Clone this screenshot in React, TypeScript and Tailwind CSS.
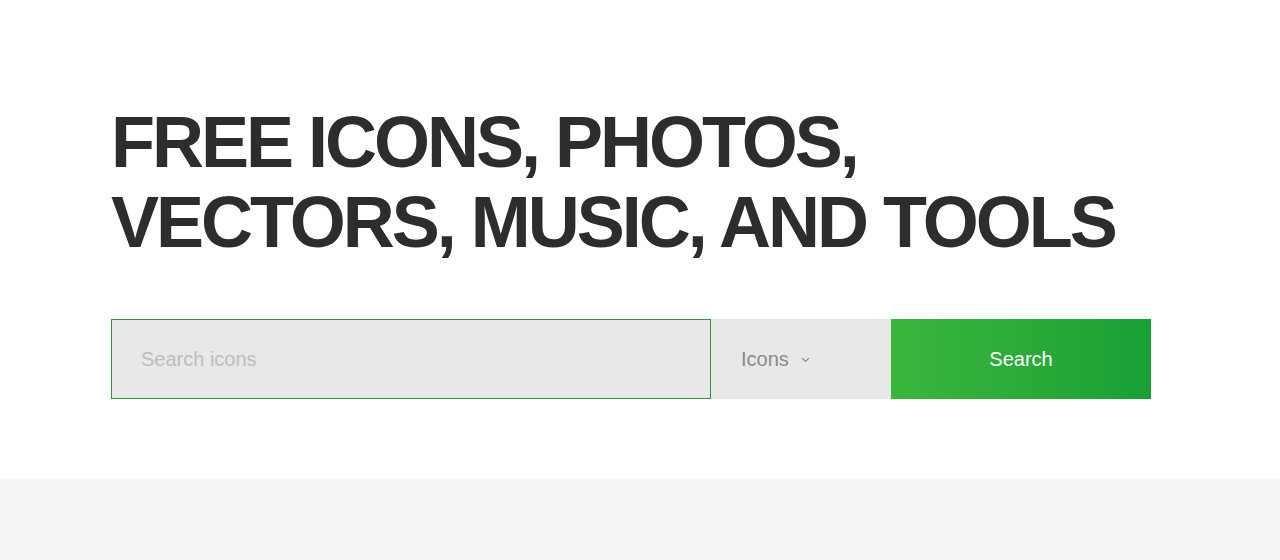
import React from "react";

export default function App() {
  return (
    <div className="min-h-[560px] bg-[#f4f4f4]" style={{ fontFamily: '"Liberation Sans", Arial, sans-serif' }}>
      <section className="bg-white h-[479px] pt-[102px] pl-[111px]">
        <h1 className="text-[72px] leading-[80px] font-bold text-[#2d2d2d] tracking-[-3px]">
          FREE ICONS, PHOTOS,
          <br />
          VECTORS, MUSIC, AND TOOLS
        </h1>
        <div className="mt-[57px] flex h-[80px]">
          <div className="w-[600px] border border-[#2f9447] bg-[#e8e8e8] flex items-center pl-[29px]">
            <input
              className="w-full bg-transparent outline-none text-[20px] text-[#555] placeholder:text-[#bdbdbd]"
              placeholder="Search icons"
            />
          </div>
          <div className="w-[180px] bg-[#e8e8e8] flex items-center pl-[30px] text-[20px] text-[#8a8a8a]">
            <span>Icons</span>
            <svg className="ml-[12px] mt-[2px]" width="9" height="6" viewBox="0 0 9 6" fill="none">
              <path d="M1 1l3.5 3.5L8 1" stroke="#8a8a8a" strokeWidth="1.2" />
            </svg>
          </div>
          <button className="w-[260px] bg-gradient-to-r from-[#3bb63c] to-[#16a034] text-white text-[20px] flex items-center justify-center">
            Search
          </button>
        </div>
      </section>
    </div>
  );
}
